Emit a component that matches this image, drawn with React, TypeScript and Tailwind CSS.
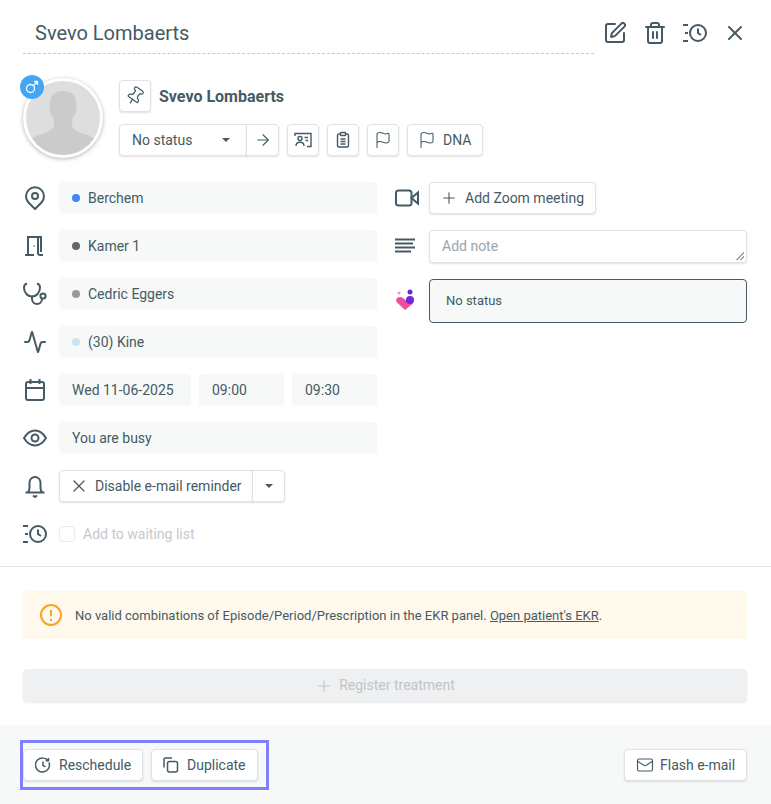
import { ReactNode } from "react";
import { Activity, ArrowRight, Flag, Mail, Pin, Plus, SquarePen, Trash2, X } from "lucide-react";

const ink = "#455a64";

function Icon({ children }: { children: ReactNode }) {
  return (
    <svg width="24" height="24" viewBox="0 0 24 24" fill="none" stroke={ink} strokeWidth="2">
      {children}
    </svg>
  );
}

function HistoryClock() {
  return (
    <Icon>
      <circle cx="15" cy="12" r="8" />
      <path d="M15 7.5V12l3 2M0 4h5M2 12h3M0 20h5" />
    </Icon>
  );
}

function LocationIcon() {
  return (
    <Icon>
      <path d="M12 23 5.500 16.500A9 9 0 1 1 18.500 16.500Z" strokeLinejoin="round" />
      <circle cx="12" cy="10" r="3" />
    </Icon>
  );
}

function DoorIcon() {
  return (
    <Icon>
      <path d="M2 21h9M5 21V3h10v16c0 1.500.5 2 2 2h3M15 3h3v15" />
      <circle cx="11" cy="12" r="0.8" fill={ink} stroke="none" />
    </Icon>
  );
}

function StethoscopeIcon() {
  return (
    <Icon>
      <path d="M4 1.500C2 2 1 3 1 5.500 1 10 4 14.500 9 14.500S17 10 17 5.500C17 3 16 2 14 1.500" />
      <path d="M9 14.500V17a5 5 0 0 0 10 0v-.5" />
      <circle cx="20" cy="14" r="2.600" />
    </Icon>
  );
}

function CalendarIcon() {
  return (
    <Icon>
      <rect x="3" y="4" width="18" height="18" rx="2" />
      <path d="M3 10h18M7.500 1v5M16.500 1v5" />
    </Icon>
  );
}

function EyeIcon() {
  return (
    <Icon>
      <path d="M1 12C4 7 8 4.500 12 4.500S20 7 23 12C20 17 16 19.500 12 19.500S4 17 1 12Z" />
      <circle cx="12" cy="12" r="3.500" />
    </Icon>
  );
}

function BellIcon() {
  return (
    <Icon>
      <path d="M2.500 18.500h19M5 18c1-1 1.500-2 1.500-4V8.500a5.500 5.500 0 0 1 11 0V14c0 2 .5 3 1.500 4M10 21.500l2 1.500 2-1.500" />
    </Icon>
  );
}

function VideoIcon() {
  return (
    <Icon>
      <rect x="1" y="4.500" width="15.500" height="15" rx="2.500" />
      <path d="M16.500 12 23 6.500v11Z" />
    </Icon>
  );
}

function LinesIcon() {
  return (
    <Icon>
      <path d="M0 4.500h20M0 8.500h18M0 12.500h20M0 16.500h16" />
    </Icon>
  );
}

function HeartIcon() {
  return (
    <svg width="24" height="24" viewBox="0 0 24 24">
      <path d="M10 21 2 13.500C0 11 2 8 5 8c2 0 4 1.500 5.500 3L13 13l5 1.500Z" fill="#ec4f9c" />
      <circle cx="15" cy="11" r="4" fill="#6d28d9" />
      <circle cx="15" cy="3" r="2.500" fill="#6d28d9" />
      <circle cx="4" cy="4" r="1.500" fill="#f48fc0" />
    </svg>
  );
}

function Btn({ className = "", children }: { className?: string; children: ReactNode }) {
  return (
    <div className={`flex h-8 items-center rounded border border-[#dfe3e5] bg-white text-[14px] text-[#455a64] shadow-[0_1px_2px_rgba(0,0,0,0.12)] ${className}`}>
      {children}
    </div>
  );
}

function Row({ icon, children }: { icon: ReactNode; children: ReactNode }) {
  return (
    <div className="flex items-center">
      <div className="flex w-9 shrink-0 items-center">{icon}</div>
      <div className="flex min-w-0 flex-1 items-center gap-2">{children}</div>
    </div>
  );
}

function Field({ dot, className = "flex-1", children }: { dot?: string; className?: string; children: ReactNode }) {
  return (
    <div className={`flex h-8 items-center rounded bg-[#f7f9f9] px-[13px] text-[14px] text-[#455a64] ${className}`}>
      {dot ? <span className="mr-2 h-2 w-2 rounded-full" style={{ backgroundColor: dot }} /> : null}
      {children}
    </div>
  );
}

function Caret() {
  return <span className="h-0 w-0 border-x-[4px] border-t-[4px] border-x-transparent border-t-[#455a64]" />;
}

export default function App() {
  return (
    <div className="flex h-[804px] w-[771px] flex-col bg-white font-['Roboto',sans-serif] text-[#455a64]">
      <div className="flex items-start pl-[23px] pr-6 pt-[13px]">
        <div className="h-[41px] w-[572px] border-b border-dashed border-[#c4c9cc] pl-3 text-[20px] leading-[40px]">
          Svevo Lombaerts
        </div>
        <div className="ml-[9px] flex items-center gap-4 pt-2">
          <SquarePen size={24} color={ink} strokeWidth={2} />
          <Trash2 size={24} color={ink} strokeWidth={2} />
          <HistoryClock />
          <X size={24} color={ink} strokeWidth={2} />
        </div>
      </div>

      <div className="flex gap-4 pl-[23px] pt-6">
        <div className="relative h-20 w-20 shrink-0">
          <div className="h-20 w-20 overflow-hidden rounded-full border-[3px] border-white bg-[#dedede] shadow-[0_1px_4px_rgba(0,0,0,0.3)]">
            <svg viewBox="0 0 74 74" width="74" height="74">
              <path d="M37 10c-8 0-13 3-13 13 0 3-1 5 0 8 1 2 2 3 3 5 1 3 1 5 1 8 0 3-4 6-9 8-7 2-12 4-14 7v15h64V59c-2-3-7-5-14-7-5-2-9-5-9-8 0-3 0-5 1-8 1-2 2-3 3-5 1-3 0-5 0-8 0-10-5-13-13-13z" fill="#cbcbcb" />
            </svg>
          </div>
          <div className="absolute -left-[3px] -top-[3px] flex h-6 w-6 items-center justify-center rounded-full bg-[#42a5f5]">
            <svg width="16" height="16" viewBox="0 0 16 16" fill="none" stroke="white" strokeWidth="1.300">
              <circle cx="6.500" cy="9.500" r="4" />
              <path d="M9.500 6.500 13.500 2.500M10 2.500h3.500V6" />
            </svg>
          </div>
        </div>
        <div className="pt-[2px]">
          <div className="flex items-center gap-2">
            <Btn className="w-8 justify-center">
              <Pin size={20} color={ink} strokeWidth={1.5} className="rotate-[35deg]" />
            </Btn>
            <span className="pt-px text-[16px] font-bold">Svevo Lombaerts</span>
          </div>
          <div className="mt-3 flex gap-2">
            <div className="flex">
              <Btn className="w-[128px] justify-between rounded-r-none pl-3 pr-4">
                No status
                <Caret />
              </Btn>
              <Btn className="-ml-px w-[33px] justify-center rounded-l-none">
                <ArrowRight size={18} color={ink} strokeWidth={1.5} />
              </Btn>
            </div>
            <Btn className="w-8 justify-center">
              <svg width="18" height="18" viewBox="0 0 18 18" fill="none" stroke={ink} strokeWidth="1.400">
                <path d="M1 5V2.500h16V15.500h-4M10.500 6.500H14M11.500 9.500H14" />
                <circle cx="6" cy="7.500" r="2" />
                <path d="M2 15c0-3 2-3.700 4-3.700s4 .7 4 3.700" />
              </svg>
            </Btn>
            <Btn className="w-8 justify-center">
              <svg width="18" height="18" viewBox="0 0 18 18" fill="none" stroke={ink} strokeWidth="1.400">
                <rect x="3.500" y="3" width="11" height="13" rx="1.500" />
                <rect x="6.500" y="1.500" width="5" height="3" rx="0.500" fill="white" />
                <path d="M6.500 8h5M6.500 10.500h5M6.500 13h5" />
              </svg>
            </Btn>
            <Btn className="w-8 justify-center">
              <Flag size={18} color={ink} strokeWidth={1.4} />
            </Btn>
            <Btn className="w-[76px] gap-[7px] pl-[10px]">
              <Flag size={18} color={ink} strokeWidth={1.4} />
              DNA
            </Btn>
          </div>
        </div>
      </div>

      <div className="flex gap-[18px] pl-[23px] pr-6 pt-6">
        <div className="flex w-[354px] flex-col gap-4">
          <Row icon={<LocationIcon />}>
            <Field dot="#4285f4">Berchem</Field>
          </Row>
          <Row icon={<DoorIcon />}>
            <Field dot="#666666">Kamer 1</Field>
          </Row>
          <Row icon={<StethoscopeIcon />}>
            <Field dot="#999999">Cedric Eggers</Field>
          </Row>
          <Row icon={<Activity size={24} color={ink} strokeWidth={2} />}>
            <Field dot="#cfe2f3">(30) Kine</Field>
          </Row>
          <Row icon={<CalendarIcon />}>
            <Field className="w-[132px]">Wed 11-06-2025</Field>
            <Field className="w-[85px]">09:00</Field>
            <Field className="w-[85px]">09:30</Field>
          </Row>
          <Row icon={<EyeIcon />}>
            <Field>You are busy</Field>
          </Row>
          <Row icon={<BellIcon />}>
            <div className="flex">
              <Btn className="w-[194px] gap-[6px] rounded-r-none pl-[9px]">
                <X size={20} color={ink} strokeWidth={1.5} />
                Disable e-mail reminder
              </Btn>
              <Btn className="-ml-px w-[33px] justify-center rounded-l-none">
                <Caret />
              </Btn>
            </div>
          </Row>
          <Row icon={<HistoryClock />}>
            <div className="flex h-8 items-center gap-2 text-[14px] text-[#c5cacd]">
              <span className="h-4 w-4 rounded-sm border border-[#e8ebec] bg-white" />
              Add to waiting list
            </div>
          </Row>
        </div>

        <div className="flex flex-1 flex-col gap-4">
          <div className="flex items-center">
            <div className="w-[34px] shrink-0"><VideoIcon /></div>
            <Btn className="w-[167px] gap-[7px] pl-[10px]">
              <Plus size={18} color={ink} strokeWidth={1.5} />
              Add Zoom meeting
            </Btn>
          </div>
          <div className="flex items-center">
            <div className="w-[34px] shrink-0"><LinesIcon /></div>
            <div className="relative flex h-[33px] flex-1 items-center rounded border border-[#dfe3e5] bg-white pl-3 text-[14px] text-[#9aa5ab] shadow-[0_1px_2px_rgba(0,0,0,0.12)]">
              Add note
              <span className="absolute bottom-[2px] right-[2px] h-2 w-2 bg-[linear-gradient(135deg,transparent_50%,#9e9e9e_50%,#9e9e9e_60%,transparent_60%,transparent_75%,#9e9e9e_75%,#9e9e9e_85%,transparent_85%)]" />
            </div>
          </div>
          <div className="flex items-center">
            <div className="w-[34px] shrink-0"><HeartIcon /></div>
            <div className="flex h-11 flex-1 items-center rounded border border-[#455a64] bg-[#f7f9f9] pl-4 text-[13px]">
              No status
            </div>
          </div>
        </div>
      </div>

      <div className="mt-4 h-px bg-[#e4e7e8]" />

      <div className="ml-[23px] mr-6 mt-6 flex h-12 items-center gap-3 rounded bg-[#fff8ed] pl-4 text-[13px]">
        <svg width="24" height="24" viewBox="0 0 24 24" fill="none" stroke="#f5a623" strokeWidth="2">
          <circle cx="12" cy="12" r="10" />
          <path d="M12 7v6M12 16v2" />
        </svg>
        <span className="pt-px">
          No valid combinations of Episode/Period/Prescription in the EKR panel. <span className="underline">Open patient's EKR</span>.
        </span>
      </div>

      <div className="ml-[23px] mr-6 mt-[30px] flex h-[33px] items-center justify-center gap-[6px] rounded bg-[#eff0f2] text-[14px] text-[#c0c5c9] shadow-[0_1px_2px_rgba(0,0,0,0.08)]">
        <Plus size={18} color="#c0c5c9" strokeWidth={1.5} />
        Register treatment
      </div>

      <div className="mt-[23px] flex flex-1 items-start justify-between bg-[#f7f9f9] pl-5 pr-6 pt-[15px]">
        <div className="flex gap-2 border-[3px] border-[#8080ff] bg-[#f7f9f9] py-[6px] pr-[8px]">
          <Btn className="w-[120px] gap-2 pl-[11px]">
            <svg width="16" height="16" viewBox="0 0 16 16" fill="none" stroke={ink} strokeWidth="1.500">
              <path d="M14 5.500A7 7 0 1 1 8 1c2 0 3.500.8 5 2.300M8 4.500v3.800l2.500 1.500M13.500 1v2.800h-2.800" />
            </svg>
            Reschedule
          </Btn>
          <Btn className="w-[107px] gap-2 pl-[11px]">
            <svg width="16" height="16" viewBox="0 0 16 16" fill="none" stroke={ink} strokeWidth="1.500">
              <path d="M1 10.500V2.500A1.500 1.500 0 0 1 2.500 1H9" />
              <rect x="4.500" y="4.500" width="10" height="10.500" rx="2" />
            </svg>
            Duplicate
          </Btn>
        </div>
        <Btn className="mt-[9px] w-[123px] gap-[6px] pl-[11px]">
          <Mail size={18} color={ink} strokeWidth={1.5} />
          Flash e-mail
        </Btn>
      </div>
    </div>
  );
}
